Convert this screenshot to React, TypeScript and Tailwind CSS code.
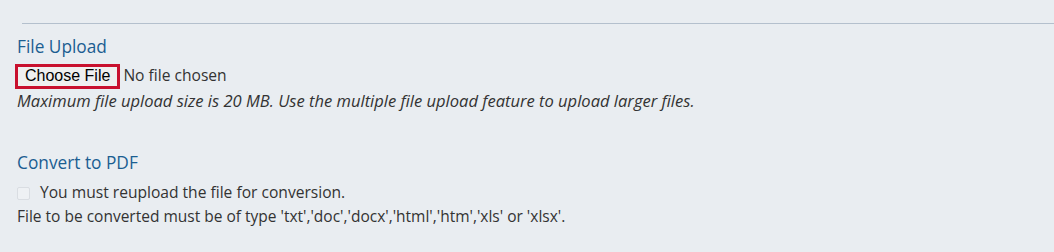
import React from 'react';

const App: React.FC = () => {
  return (
    <div className="h-[252px] w-[1054px] overflow-hidden bg-[#e9edf1] font-['Open_Sans',sans-serif] text-[15.6px] text-[#333333]">
      <div className="pt-[23px]">
        <hr className="ml-[22px] border-0 border-t border-[#b4c0cd]" />
      </div>

      <div className="px-[17px]">
        <h3 className="mt-[11px] h-[24px] text-[17.3px] leading-[24px] text-[#1b5e91]">File Upload</h3>
        <div className="mt-[4px] flex h-[26px] items-center">
          <label className="-ml-[2px] flex h-[25px] items-center border-[3px] border-[#c8102e] bg-[#efefef] px-[7px] font-['Liberation_Sans',Arial,sans-serif] text-[16px] leading-none text-black">
            Choose File
          </label>
          <span className="ml-[3px]">No file chosen</span>
        </div>
        <p className="mt-[1px] h-[22px] text-[16.55px] italic leading-[22px]">
          Maximum file upload size is 20 MB. Use the multiple file upload feature to upload larger files.
        </p>

        <h3 className="mt-[39px] h-[24px] text-[17.3px] leading-[24px] text-[#1b5e91]">Convert to PDF</h3>
        <div className="mt-[6px] flex h-[24px] items-center">
          <span className="h-[13px] w-[13px] rounded-[2px] border border-[#d9dde2] bg-[#eef1f4]" />
          <span className="ml-[10px]">You must reupload the file for conversion.</span>
        </div>
        <p className="h-[22px] text-[15.5px] leading-[22px]">
          File to be converted must be of type 'txt','doc','docx','html','htm','xls' or 'xlsx'.
        </p>
      </div>
    </div>
  );
};

export default App;
